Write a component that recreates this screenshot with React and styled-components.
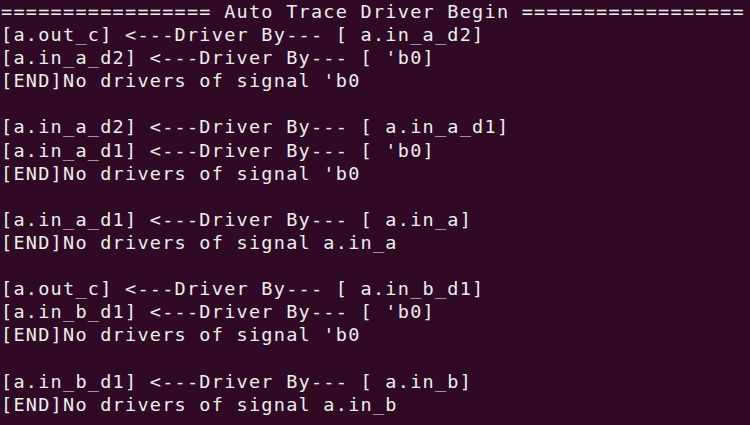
import React from 'react';
import styled, { createGlobalStyle } from 'styled-components';

const GlobalStyle = createGlobalStyle`
  html, body {
    margin: 0;
    padding: 0;
    background: #300a24;
  }
`;

const lines = [
  '================= Auto Trace Driver Begin ==================',
  "[a.out_c] <---Driver By--- [ a.in_a_d2]",
  "[a.in_a_d2] <---Driver By--- [ 'b0]",
  "[END]No drivers of signal 'b0",
  '',
  "[a.in_a_d2] <---Driver By--- [ a.in_a_d1]",
  "[a.in_a_d1] <---Driver By--- [ 'b0]",
  "[END]No drivers of signal 'b0",
  '',
  '[a.in_a_d1] <---Driver By--- [ a.in_a]',
  '[END]No drivers of signal a.in_a',
  '',
  '[a.out_c] <---Driver By--- [ a.in_b_d1]',
  "[a.in_b_d1] <---Driver By--- [ 'b0]",
  "[END]No drivers of signal 'b0",
  '',
  '[a.in_b_d1] <---Driver By--- [ a.in_b]',
  '[END]No drivers of signal a.in_b',
];

export default function App() {
  return (
    <>
      <GlobalStyle />
      <Terminal>
        {lines.map((l, i) => (
          <Line key={i}>{l || '\u00a0'}</Line>
        ))}
      </Terminal>
    </>
  );
}

const Terminal = styled.div`
  width: 750px;
  height: 425px;
  overflow: hidden;
  background: #300a24;
  color: #eeeeec;
  font-family: "DejaVu Sans Mono", monospace;
  font-size: 18.5px;
  letter-spacing: 1.26px;
  padding: 0 0 0 1px;
  box-sizing: border-box;
`;

const Line = styled.div`
  height: 23.1px;
  line-height: 23.1px;
  white-space: pre;
`;
